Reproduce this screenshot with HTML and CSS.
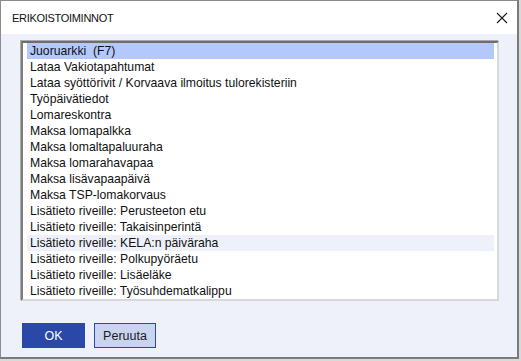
FILE: index.html
```html
<!DOCTYPE html>
<html lang="fi">
<head>
    <meta charset="UTF-8">
    <title>Erikoistoiminnot</title>
    <link rel="stylesheet" href="styles.css">
</head>
<body>
    <div class="dialog">
        <div class="titlebar">
            <span class="title">ERIKOISTOIMINNOT</span>
            <svg class="close" width="12" height="12" viewBox="0 0 12 12">
                <path d="M1 1 L11 11 M11 1 L1 11" stroke="#1a1a1a" stroke-width="1.1" fill="none"/>
            </svg>
        </div>
        <div class="content">
            <ul class="listbox">
                <li class="selected">Juoruarkki&nbsp; (F7)</li>
                <li>Lataa Vakiotapahtumat</li>
                <li>Lataa syöttörivit / Korvaava ilmoitus tulorekisteriin</li>
                <li>Työpäivätiedot</li>
                <li>Lomareskontra</li>
                <li>Maksa lomapalkka</li>
                <li>Maksa lomaltapaluuraha</li>
                <li>Maksa lomarahavapaa</li>
                <li>Maksa lisävapaapäivä</li>
                <li>Maksa TSP-lomakorvaus</li>
                <li>Lisätieto riveille: Perusteeton etu</li>
                <li>Lisätieto riveille: Takaisinperintä</li>
                <li class="hover">Lisätieto riveille: KELA:n päiväraha</li>
                <li>Lisätieto riveille: Polkupyöräetu</li>
                <li>Lisätieto riveille: Lisäeläke</li>
                <li>Lisätieto riveille: Työsuhdematkalippu</li>
            </ul>
            <div class="buttons">
                <button class="btn btn-primary">OK</button>
                <button class="btn btn-secondary">Peruuta</button>
            </div>
        </div>
    </div>
</body>
</html>
```

FILE: styles.css
```css
body {
    margin: 0;
    background-color: #d9d9d9;
    font-family: "Liberation Sans", Arial, sans-serif;
    font-size: 12px;
    color: #000;
}

.dialog {
    width: 516px;
    height: 356px;
    border: 1px solid #8c8c8c;
    border-right: 2px solid #7a7a7a;
    border-bottom: 2px solid #7a7a7a;
    background-color: #eef1fa;
    display: flex;
    flex-direction: column;
}

.titlebar {
    height: 33px;
    background-color: #fff;
    display: flex;
    align-items: center;
    justify-content: space-between;
    padding: 0 9px 0 11px;
    flex-shrink: 0;
}

.title {
    font-size: 11px;
    letter-spacing: -0.3px;
    color: #111;
    padding-top: 1px;
}

.close {
    display: block;
}

.content {
    padding: 7px 0 0 20px;
}

.listbox {
    list-style: none;
    margin: 0;
    width: 467px;
    height: 256px;
    padding: 0 3px 0 4px;
    background-color: #fff;
    border-top: 2px solid #6e6e6e;
    border-left: 2px solid #7c7c7c;
    border-right: 2px solid #d8d8d8;
    border-bottom: 2px solid #d8d8d8;
    box-shadow: -1px -1px 0 #a9a9a9;
}

.listbox li {
    height: 16px;
    line-height: 16px;
    padding-left: 3px;
    white-space: nowrap;
    font-size: 12.2px;
    color: #111;
}

.listbox li.selected {
    background-color: #b4c8fd;
}

.listbox li.hover {
    background-color: #eef1fa;
}

.buttons {
    display: flex;
    gap: 9px;
    margin-top: 22px;
    margin-left: 1px;
}

.btn {
    height: 25px;
    font-family: "Liberation Sans", Arial, sans-serif;
    font-size: 12.5px;
    border: 1px solid #2a48a8;
    padding: 0;
    cursor: pointer;
}

.btn-primary {
    width: 63px;
    background-color: #2a48a8;
    color: #fff;
}

.btn-secondary {
    width: 62px;
    background-color: #c9d4ee;
    color: #1a1a2a;
}
```
